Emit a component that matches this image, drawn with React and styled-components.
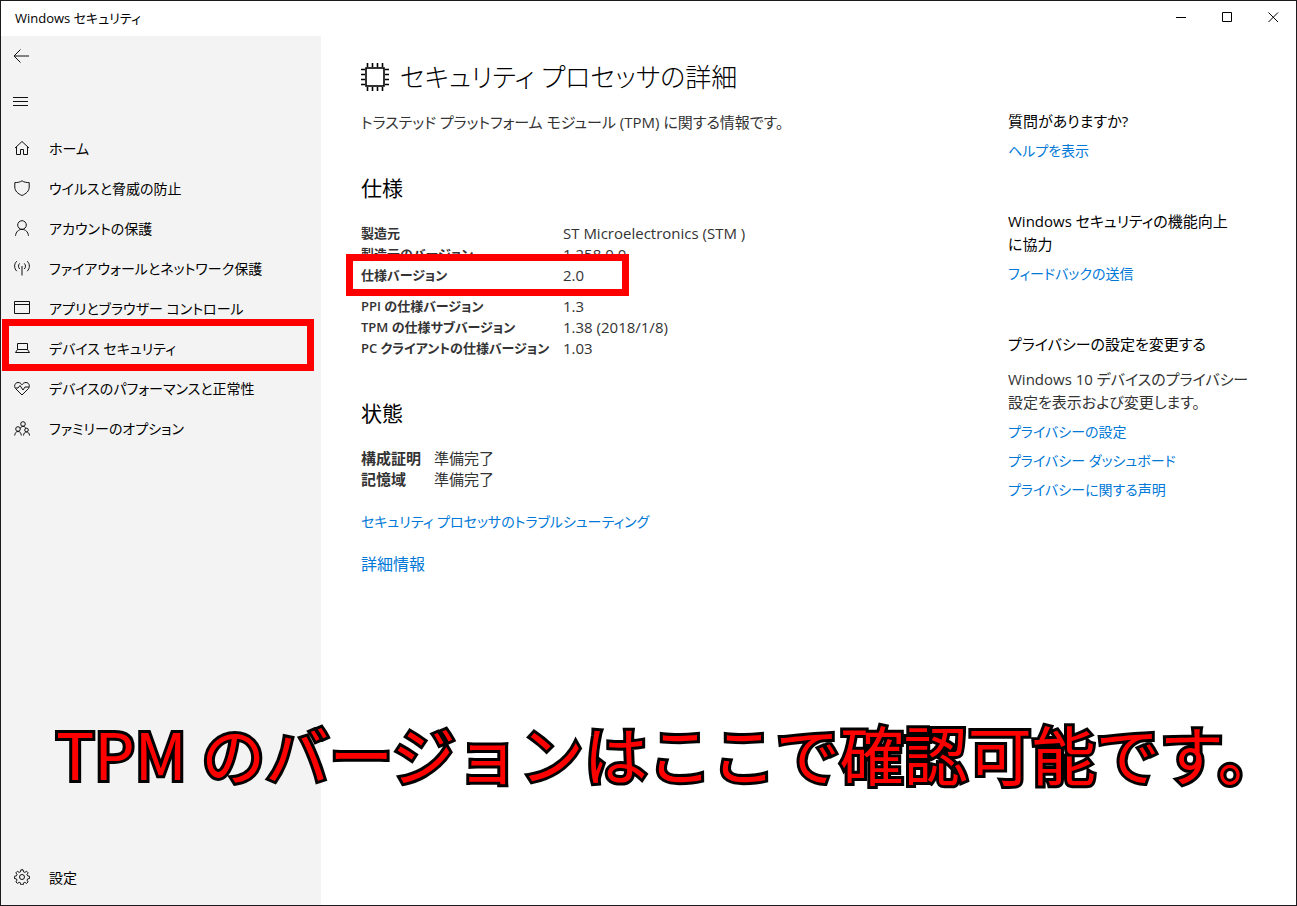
import React from 'react';
import styled, { createGlobalStyle } from 'styled-components';

const navItems = [
  { id: 'home', label: 'ホーム' },
  { id: 'virus', label: 'ウイルスと脅威の防止' },
  { id: 'account', label: 'アカウントの保護' },
  { id: 'firewall', label: 'ファイアウォールとネットワーク保護' },
  { id: 'apps', label: 'アプリとブラウザー コントロール' },
  { id: 'device', label: 'デバイス セキュリティ', marked: true },
  { id: 'health', label: 'デバイスのパフォーマンスと正常性' },
  { id: 'family', label: 'ファミリーのオプション' },
];

const specRows = [
  { label: '製造元', value: 'ST Microelectronics (STM )' },
  { label: '製造元のバージョン', value: '1.258.0.0' },
  { label: '仕様バージョン', value: '2.0', marked: true },
  { label: 'PPI の仕様バージョン', value: '1.3' },
  { label: 'TPM の仕様サブバージョン', value: '1.38 (2018/1/8)' },
  { label: 'PC クライアントの仕様バージョン', value: '1.03' },
];

const statusRows = [
  { label: '構成証明', value: '準備完了' },
  { label: '記憶域', value: '準備完了' },
];

const iconPaths = {
  back: <path d="M16 8H1M7.5 1.5L1 8l6.5 6.5" />,
  menu: <path d="M0 4.5h15M0 8.5h15M0 12.5h15" />,
  home: <path d="M1 8l7-6.5L15 8M2.5 7v7.5h4v-5h3v5h4V7" />,
  virus: <path d="M8 .8C6 2.2 3.500 2.600.8 2.600V7c0 4 3 6.700 7.200 8.500C12.200 13.700 15.200 11 15.200 7V2.600C12.500 2.600 10 2.200 8 .8z" />,
  account: (
    <>
      <circle cx="8" cy="5" r="4.300" />
      <path d="M1.500 15.800c.4-4 3-6.400 6.500-6.400s6.100 2.400 6.500 6.400" />
    </>
  ),
  firewall: (
    <path d="M8 6v9.500M5.700 9c-1.600-1.600-1.600-4 0-5.600M10.300 9c1.600-1.600 1.600-4 0-5.600M2.800 11.200c-2.900-2.900-2.900-7.300 0-10M13.200 11.200c2.900-2.900 2.900-7.300 0-10" />
  ),
  apps: <path d="M.5 1.500h15v12H.5zM.5 4.500h15" />,
  device: <path d="M3.500 3.500h10v6h-10zM3.500 9.500l-2 3h14l-2-3" />,
  health: (
    <path d="M8 15L1.600 8.600C-.3 6.500.8 2.500 4 2.500c1.700 0 3 .8 4 2.300 1-1.500 2.300-2.300 4-2.300 3.200 0 4.300 4 2.400 6.100zM1.500 8H4l2-2.500L9 10l2-3h4" />
  ),
  family: (
    <>
      <circle cx="9" cy="4" r="2.300" />
      <circle cx="4" cy="9" r="2.300" />
      <circle cx="12.500" cy="10" r="1.800" />
      <path d="M.7 15.500c.2-2.400 1.300-4 3.300-4s3.300 1.600 3.300 4M9.500 15.500c.2-2.100 1.200-3.500 3-3.500s2.900 1.400 3 3.500M6.300 8.500C6.800 7.100 7.700 6.300 9 6.300s2.300.8 2.800 2" />
    </>
  ),
  settings: (
    <>
      <circle cx="8" cy="8" r="2.500" />
      <path d="M6.900.8h2.200l.4 2 1.300.6 1.800-1.100 1.500 1.500-1.100 1.800.6 1.300 2 .4v2.200l-2 .4-.6 1.200 1.100 1.800-1.500 1.500-1.800-1.100-1.300.6-.4 2H6.900l-.4-2-1.300-.6-1.800 1.100-1.500-1.500L3 11.100l-.6-1.200-2-.4V7.300l2-.4.6-1.300-1.100-1.800 1.500-1.500 1.800 1.100 1.300-.6z" />
    </>
  ),
};

const Icon = ({ name }) => (
  <IconSvg viewBox="0 0 16 16" aria-hidden="true">{iconPaths[name]}</IconSvg>
);

const ChipIcon = () => (
  <ChipSvg viewBox="0 0 28 28" aria-hidden="true">
    <rect x="5" y="5" width="18" height="18" />
    <path d="M6.500 4V0M11.500 4V0M16.500 4V0M21.500 4V0M6.500 24v4M11.500 24v4M16.500 24v4M21.500 24v4M4 6.500H0M4 11.500H0M4 16.500H0M4 21.500H0M24 6.500h4M24 11.500h4M24 16.500h4M24 21.500h4" />
  </ChipSvg>
);

const DataTable = ({ rows, labelWidth, labelSize }) => (
  <Table>
    <tbody>
      {rows.map((row) => (
        <DataRow key={row.label} $marked={row.marked}>
          <LabelCell scope="row" $width={labelWidth} $size={labelSize}>{row.label}</LabelCell>
          <ValueCell>{row.value}</ValueCell>
        </DataRow>
      ))}
    </tbody>
  </Table>
);

const TitleBar = () => (
  <TitleBarWrapper>
    <span>Windows セキュリティ</span>
    <WindowControls>
      <ControlButton type="button" aria-label="最小化">
        <ControlSvg viewBox="0 0 11 11"><path d="M0 5.500h10" /></ControlSvg>
      </ControlButton>
      <ControlButton type="button" aria-label="最大化">
        <ControlSvg viewBox="0 0 11 11"><path d="M.5.5h9v9h-9z" /></ControlSvg>
      </ControlButton>
      <ControlButton type="button" aria-label="閉じる">
        <ControlSvg viewBox="0 0 11 11"><path d="M.5.5l9.500 9.500M10 .5L.5 10" /></ControlSvg>
      </ControlButton>
    </WindowControls>
  </TitleBarWrapper>
);

const Sidebar = () => (
  <SidebarWrapper>
    <IconButton type="button" aria-label="戻る"><Icon name="back" /></IconButton>
    <IconButton type="button" aria-label="メニュー"><Icon name="menu" /></IconButton>
    <NavList>
      {navItems.map((item) => (
        <NavItem key={item.id} $marked={item.marked}>
          <NavLink href={`#${item.id}`}>
            <Icon name={item.id} />
            {item.label}
          </NavLink>
        </NavItem>
      ))}
    </NavList>
    <NavLink href="#settings">
      <Icon name="settings" />
      設定
    </NavLink>
  </SidebarWrapper>
);

const HelpPanel = () => (
  <Aside>
    <HelpGroup>
      <HelpTitle>質問がありますか?</HelpTitle>
      <TextLink href="#help">ヘルプを表示</TextLink>
    </HelpGroup>
    <HelpGroup>
      <HelpTitle>
        Windows セキュリティの機能向上
        <br />
        に協力
      </HelpTitle>
      <TextLink href="#feedback">フィードバックの送信</TextLink>
    </HelpGroup>
    <HelpGroup>
      <HelpTitle $spaced>プライバシーの設定を変更する</HelpTitle>
      <HelpText>
        Windows 10 デバイスのプライバシー
        <br />
        設定を表示および変更します。
      </HelpText>
      <TextLink href="#privacy">プライバシーの設定</TextLink>
      <TextLink href="#dashboard">プライバシー ダッシュボード</TextLink>
      <TextLink href="#statement">プライバシーに関する声明</TextLink>
    </HelpGroup>
  </Aside>
);

const App = () => (
  <>
    <GlobalStyle />
    <Window>
      <TitleBar />
      <Body>
        <Sidebar />
        <Main>
          <PageTitle>
            <ChipIcon />
            セキュリティ プロセッサの詳細
          </PageTitle>
          <Intro>トラステッド プラットフォーム モジュール (TPM) に関する情報です。</Intro>
          <SectionTitle>仕様</SectionTitle>
          <DataTable rows={specRows} labelWidth={202} labelSize={13} />
          <SectionTitle>状態</SectionTitle>
          <DataTable rows={statusRows} labelWidth={73} labelSize={15} />
          <LinkStack>
            <TextLink href="#troubleshoot">セキュリティ プロセッサのトラブルシューティング</TextLink>
            <TextLink href="#details" $large>詳細情報</TextLink>
          </LinkStack>
        </Main>
        <HelpPanel />
      </Body>
      <Caption>TPM のバージョンはここで確認可能です。</Caption>
    </Window>
  </>
);

const GlobalStyle = createGlobalStyle`
  *,
  *::after {
    box-sizing: border-box;
  }

  body {
    margin: 0;
    color: #000;
    background: #fff;
    font-family: 'Open Sans', 'Noto Sans CJK JP', sans-serif;
    font-size: 15px;
    font-feature-settings: 'palt';
  }

  button {
    border: 0;
    padding: 0;
    background: none;
    color: inherit;
    font: inherit;
  }

  a {
    text-decoration: none;
  }
`;

const Window = styled.div`
  position: relative;
  display: flex;
  flex-direction: column;
  min-height: 100vh;
  border: 1px solid #1c1a1c;
`;

const TitleBarWrapper = styled.header`
  display: flex;
  justify-content: space-between;
  height: 35px;
  padding-left: 14px;
  font-size: 13px;
  line-height: 35px;
`;

const WindowControls = styled.div`
  display: flex;
`;

const ControlButton = styled.button`
  display: flex;
  justify-content: center;
  align-items: center;
  width: 46px;
  height: 32px;
`;

const ControlSvg = styled.svg`
  width: 11px;
  height: 11px;
  fill: none;
  stroke: #000;
`;

const Body = styled.div`
  display: flex;
  flex: 1;
`;

const SidebarWrapper = styled.nav`
  display: flex;
  flex-direction: column;
  width: 320px;
  flex-shrink: 0;
  padding-bottom: 8px;
  background: #f3f3f3;
`;

const IconButton = styled.button`
  display: flex;
  align-items: center;
  width: 44px;
  height: 40px;
  padding-left: 12px;
  margin-bottom: 5px;
`;

const IconSvg = styled.svg`
  width: 16px;
  height: 16px;
  flex-shrink: 0;
  fill: none;
  stroke: #111;
`;

const ChipSvg = styled.svg`
  width: 28px;
  height: 28px;
  flex-shrink: 0;
  fill: none;
  stroke: #000;
  stroke-width: 1.6;
`;

const NavList = styled.ul`
  flex: 1;
  margin: 0;
  padding: 2px 0 0;
  list-style: none;
`;

const NavItem = styled.li`
  position: relative;

  ${({ $marked }) => $marked && `
    &::after {
      content: '';
      position: absolute;
      inset: -9px 7px -3px 1px;
      border: 7px solid #f00;
      pointer-events: none;
    }
  `}
`;

const NavLink = styled.a`
  display: flex;
  align-items: center;
  gap: 19px;
  height: 40px;
  padding-left: 13px;
  color: #000;
  font-size: 14px;
  white-space: nowrap;
`;

const Main = styled.main`
  flex: 1;
  min-width: 0;
  padding: 20px 0 0 40px;
  white-space: nowrap;
`;

const PageTitle = styled.h1`
  display: flex;
  align-items: center;
  gap: 11px;
  margin: 0;
  font-size: 26px;
  font-weight: 300;
  line-height: 42px;
`;

const Intro = styled.p`
  margin: 12px 0 0;
  color: #333;
  font-size: 15px;
  line-height: 24px;
`;

const SectionTitle = styled.h2`
  margin: 38px 0 19px;
  font-size: 21px;
  font-weight: 400;
  line-height: 32px;
`;

const Table = styled.table`
  border-collapse: collapse;
  color: #333;
  line-height: 21px;
`;

const DataRow = styled.tr`
  position: relative;

  ${({ $marked }) => $marked && `
    th, td {
      padding-bottom: 10px;
    }

    &::after {
      content: '';
      position: absolute;
      top: -11px;
      left: -15px;
      width: 283px;
      height: 42px;
      border: 7px solid #f00;
      pointer-events: none;
    }
  `}
`;

const LabelCell = styled.th`
  width: ${({ $width }) => $width}px;
  padding: 0;
  font-size: ${({ $size }) => $size}px;
  font-weight: 600;
  text-align: left;
`;

const ValueCell = styled.td`
  padding: 0;
`;

const TextLink = styled.a`
  color: #0078d7;
  font-size: ${({ $large }) => ($large ? 16 : 14)}px;
  line-height: 23px;
`;

const LinkStack = styled.div`
  display: flex;
  flex-direction: column;
  align-items: flex-start;
  gap: 20px;
  margin-top: 20px;
`;

const Aside = styled.aside`
  display: flex;
  flex-direction: column;
  gap: 48px;
  width: 288px;
  flex-shrink: 0;
  padding-top: 74px;
  font-size: 15px;
  line-height: 23px;
  white-space: nowrap;
`;

const HelpGroup = styled.section`
  display: flex;
  flex-direction: column;
  align-items: flex-start;
  gap: 6px;
`;

const HelpTitle = styled.h3`
  margin: 0 0 ${({ $spaced }) => ($spaced ? 6 : 0)}px;
  font-size: 15px;
  font-weight: 400;
`;

const HelpText = styled.p`
  margin: 0;
  color: #333;
`;

const Caption = styled.p`
  position: absolute;
  left: 55px;
  bottom: 105px;
  margin: 0;
  color: #f00;
  font-family: 'Noto Sans CJK JP', sans-serif;
  font-size: 64px;
  font-weight: 400;
  font-feature-settings: normal;
  line-height: 96px;
  white-space: nowrap;
  -webkit-text-stroke: 6px #000;
  stroke-linejoin: round;
  paint-order: stroke fill;
`;

export default App;
